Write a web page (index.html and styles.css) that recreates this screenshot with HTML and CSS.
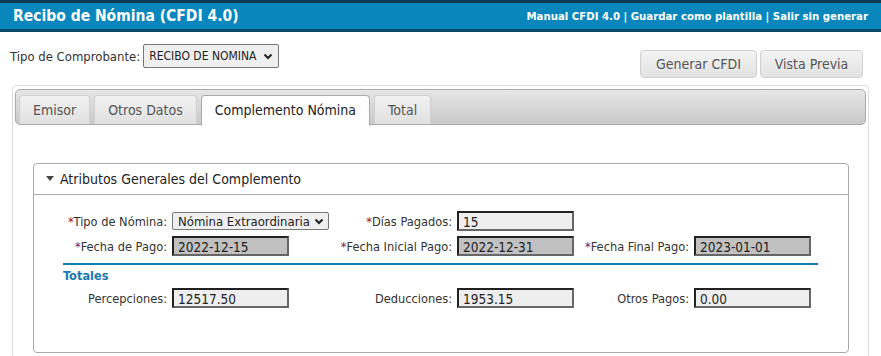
FILE: index.html
```html
<!DOCTYPE html>
<html>
<head>
  <title>Recibo de Nómina (CFDI 4.0)</title>
  <link rel="stylesheet" href="styles.css">
</head>
<body>
  <div class="topbar">
    <h1>Recibo de Nómina (CFDI 4.0)</h1>
    <div class="links">
      <a href="#">Manual CFDI 4.0</a> | <a href="#">Guardar como plantilla</a> | <a href="#">Salir sin generar</a>
    </div>
  </div>

  <div class="toolbar">
    <div class="tipo">
      <label>Tipo de Comprobante:</label>
      <div class="fake-select sel-comp">RECIBO DE NOMINA
        <svg width="10" height="7" viewBox="0 0 10 7"><path d="M1.5 1.5 L5 5 L8.5 1.5" fill="none" stroke="#222" stroke-width="2"/></svg>
      </div>
    </div>
    <div class="actions">
      <button>Generar CFDI</button>
      <button>Vista Previa</button>
    </div>
  </div>

  <div class="tabs">
    <ul class="tab-nav">
      <li>Emisor</li>
      <li>Otros Datos</li>
      <li class="active">Complemento Nómina</li>
      <li>Total</li>
    </ul>

    <div class="panel">
      <div class="panel-head">
        <svg width="8" height="6" viewBox="0 0 8 6"><path d="M0 0 H8 L4 5 Z" fill="#444"/></svg>
        Atributos Generales del Complemento
      </div>
      <div class="form">
        <label><span class="req">*</span>Tipo de Nómina:</label>
        <div class="fake-select sel-nomina">Nómina Extraordinaria
          <svg width="10" height="7" viewBox="0 0 10 7"><path d="M1.5 1.5 L5 5 L8.5 1.5" fill="none" stroke="#222" stroke-width="2"/></svg>
        </div>
        <label><span class="req">*</span>Días Pagados:</label>
        <input class="field" value="15">
        <span></span><span></span>

        <label><span class="req">*</span>Fecha de Pago:</label>
        <div><input class="field ro" value="2022-12-15" readonly></div>
        <label><span class="req">*</span>Fecha Inicial Pago:</label>
        <input class="field ro" value="2022-12-31" readonly>
        <label><span class="req">*</span>Fecha Final Pago:</label>
        <input class="field ro" value="2023-01-01" readonly>

        <div class="sep"></div>
        <div class="subtitle">Totales</div>

        <label>Percepciones:</label>
        <div><input class="field" value="12517.50"></div>
        <label>Deducciones:</label>
        <input class="field" value="1953.15">
        <label>Otros Pagos:</label>
        <input class="field" value="0.00">
      </div>
    </div>
  </div>
</body>
</html>
```

FILE: styles.css
```css
body { margin: 0; font-family: "DejaVu Sans Condensed", "DejaVu Sans", sans-serif; font-size: 13px; color: #333; background: #fff; }

.topbar { display: flex; justify-content: space-between; align-items: center; height: 26px; padding: 0 13px; background: #0987bd; border-top: 3px solid #0c3b56; border-bottom: 3px solid #0c4a6c; }
.topbar h1 { margin: 0; font-size: 15.5px; font-weight: bold; color: #fff; }
.links { color: #fff; font-weight: bold; font-size: 11.3px; }
.links a { color: #fff; text-decoration: none; }

.toolbar { display: flex; justify-content: space-between; align-items: flex-start; padding: 12px 18px 0 10px; }
.tipo { display: flex; align-items: center; gap: 3px; }
.fake-select { display: flex; align-items: center; justify-content: space-between; box-sizing: border-box; background: #efefef; border: 1px solid #777; border-radius: 2px; color: #222; }
.sel-comp { width: 136px; height: 24px; padding: 0 5px; font-size: 12px; }
.actions { display: flex; gap: 3px; margin-top: 6px; }
.actions button { height: 28px; padding: 0 12px; font-family: inherit; font-size: 14px; color: #555; background: linear-gradient(#f4f4f4, #e2e2e2); border: 1px solid #d0d0d0; border-radius: 4px; }
.actions button:first-child { width: 117px; }
.actions button:last-child { width: 103px; }

.tabs { margin: 7px 12px 0 12px; border: 1px solid #ddd; border-radius: 4px; padding: 3px 2px 4px; }
.tab-nav { display: flex; gap: 4px; margin: 0; padding: 5px 3px 0; list-style: none; height: 29px; background: linear-gradient(#e6e6e6, #c9c9c9); border: 1px solid #aaa; border-radius: 5px; }
.tab-nav li { padding: 0 13px; line-height: 29px; font-size: 14px; color: #555; background: linear-gradient(#f2f2f2, #e0e0e0); border: 1px solid #d0d0d0; border-bottom: none; border-radius: 4px 4px 0 0; }
.tab-nav li.active { background: #fff; color: #222; border-color: #aaa; height: 30px; margin-bottom: -1px; }

.panel { margin: 38px 17px 0 18px; border: 1px solid #aaa; border-radius: 4px; }
.panel-head { display: flex; align-items: center; gap: 6px; height: 30px; padding-left: 12px; font-size: 14px; color: #222; border-bottom: 1px solid #aaa; }

.form { display: grid; grid-template-columns: 109px 157px 128px 117px 120px 117px; row-gap: 5px; align-items: center; padding: 16px 0 44px 29px; font-size: 12.7px; }
.form label { text-align: right; padding-right: 5px; white-space: nowrap; }
.req { color: #8a1538; }
.sel-nomina { width: 157px; height: 18px; padding: 0 4px 0 5px; font-size: 13px; }
.field { box-sizing: border-box; width: 117px; height: 20px; padding: 2px 4px 0; font-family: inherit; font-size: 13.5px; color: #222; background: #eee; border: 2px solid; border-color: #222 #666 #666 #222; }
.field.ro { background: #c1c1c1; }
.sep { grid-column: 1 / -1; height: 2px; background: #0a80b8; margin-top: 2px; width: 755px; }
.subtitle { grid-column: 1 / -1; font-weight: bold; color: #1a7ab0; margin-top: -2px; }
```
